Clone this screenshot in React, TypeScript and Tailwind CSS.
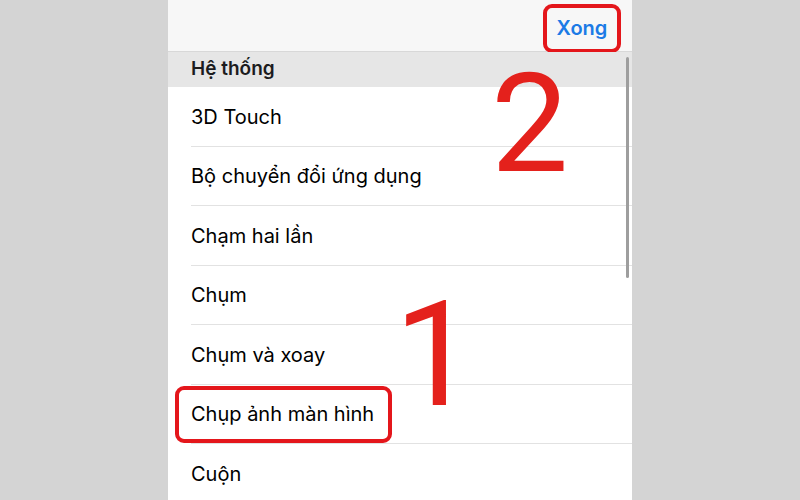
const ROWS = [
  "3D Touch",
  "Bộ chuyển đổi ứng dụng",
  "Chạm hai lần",
  "Chụm",
  "Chụm và xoay",
  "Chụp ảnh màn hình",
  "Cuộn",
];

export default function App() {
  return (
    <div className="flex h-[500px] w-[800px] overflow-hidden bg-[#d4d4d4] font-['Inter','Noto_Sans',sans-serif]">
      <div className="w-[168px] shrink-0" />

      <div className="relative flex w-[464px] shrink-0 flex-col bg-white">
        {/* top bar */}
        <div className="flex h-[52px] shrink-0 items-center justify-end border-b border-[#d8d8d8] bg-[#f7f7f7] pr-[11px]">
          <div className="mt-[5px] flex h-[49px] w-[78px] items-center justify-center rounded-[9px] border-[4px] border-[#e4161b]">
            <span className="text-[20px] font-semibold text-[#1b7be6]">Xong</span>
          </div>
        </div>

        {/* section header */}
        <div className="flex h-[35px] shrink-0 items-center bg-[#e6e6e6] pl-[23px]">
          <span className="text-[19px] font-semibold text-[#1c1c1e]">Hệ thống</span>
        </div>

        {ROWS.map((label, i) => (
          <div key={label} className="relative flex h-[59.5px] shrink-0 items-center pl-[23px]">
            {i === 5 ? (
              <div className="-ml-[16px] flex h-[57px] w-[217px] items-center rounded-[9px] border-[4px] border-[#e4161b] pl-[12px]">
                <span className="text-[20px] text-black">{label}</span>
              </div>
            ) : (
              <span className="text-[20px] text-black">{label}</span>
            )}
            {i < ROWS.length - 1 && (
              <div className="absolute bottom-0 left-[23px] right-0 h-px bg-[#e2e2e2]" />
            )}
          </div>
        ))}

        {/* scroll indicator */}
        <div className="absolute left-[458px] top-[57px] h-[221px] w-[3px] rounded-full bg-[#9e9e9e]" />

        {/* annotations */}
        <span className="absolute left-[323px] top-[55px] font-['Roboto',sans-serif] text-[138px] leading-none text-[#e4211c]">
          2
        </span>
        <span className="absolute left-[226px] top-[283px] font-['Roboto',sans-serif] text-[146px] leading-none text-[#e4211c]">
          1
        </span>
      </div>

      <div className="flex-1" />
    </div>
  );
}
